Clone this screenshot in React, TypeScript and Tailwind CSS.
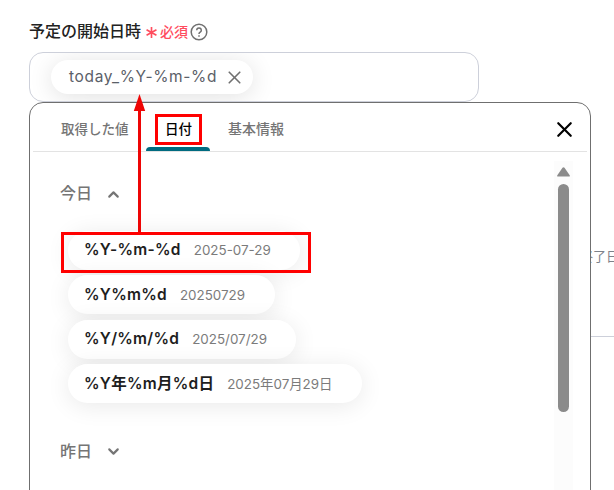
import { ChevronDown, ChevronUp, X } from "lucide-react";

type DateFormat = {
  format: string;
  example: string;
  width: string;
};

const formats: DateFormat[] = [
  { format: "%Y-%m-%d", example: "2025-07-29", width: "w-[232px]" },
  { format: "%Y%m%d", example: "20250729", width: "w-[207px]" },
  { format: "%Y/%m/%d", example: "2025/07/29", width: "w-[228px]" },
  { format: "%Y年%m月%d日", example: "2025年07月29日", width: "w-[294px]" },
];

function FieldLabel() {
  return (
    <div className="flex h-[22px] items-center whitespace-nowrap">
      <span className="w-[112px] text-[16px] font-medium text-[#222]">予定の開始日時</span>
      <svg className="ml-[5px] mt-[3px] h-[11px] w-[11px]" viewBox="0 0 10 10" stroke="#ff4d5e" strokeWidth="1.5">
        <path d="M5 0v10M.5 2.5l9 5M9.5 2.5l-9 5" />
      </svg>
      <span className="ml-[3px] text-[14px] font-medium text-[#ff4d5e]">必須</span>
      <svg className="ml-[2px] mt-px h-[18px] w-[18px]" viewBox="0 0 18 18" fill="none" stroke="#707070" strokeWidth="1.5">
        <circle cx="9" cy="9" r="7.8" />
        <path d="M6.7 7.2a2.3 2.3 0 1 1 3.5 2C9.3 9.8 9 10.1 9 11" />
        <path d="M9 12.2v1.6" />
      </svg>
    </div>
  );
}

function SelectedValue() {
  return (
    <div className="h-[50px] w-[450px] overflow-hidden rounded-[14px] border border-[#cdd0da] pl-[21px] pt-[7px]">
      <div className="flex h-[34px] w-[202px] items-center rounded-full bg-white pl-[18px] shadow-[0_3px_24px_rgba(0,0,0,0.12)]">
        <span className="w-[149px] whitespace-nowrap text-[15.5px] tracking-[0.65px] text-[#5b6068]">today_%Y-%m-%d</span>
        <X className="ml-[6px]" size={21} strokeWidth={1.9} color="#707070" />
      </div>
    </div>
  );
}

function Tabs() {
  return (
    <div className="ml-[3px] mr-[3px] flex h-[49px] border-b border-[#e3e3e3] text-[13.5px] font-medium text-[#757575]">
      <div className="w-[113px] whitespace-nowrap pl-[28px] pt-[16px] leading-5">取得した値</div>
      <div className="relative w-[64px] pl-px pt-[16px] text-center leading-5 text-black">
        日付
        <span className="absolute bottom-0 left-0 h-1 w-full rounded-t bg-[#006b80]" />
        <span className="absolute left-[9px] top-[11px] h-[31px] w-[47px] border-3 border-[#ff0000]" />
      </div>
      <div className="whitespace-nowrap pl-[18px] pt-[16px] text-[14px] leading-5">基本情報</div>
      <X className="ml-auto mr-[10px] mt-[14px]" size={25} strokeWidth={2.1} color="#000" />
    </div>
  );
}

function FormatChip({ format, example, width }: DateFormat) {
  return (
    <div
      className={`${width} flex h-[39px] items-center gap-[13px] whitespace-nowrap rounded-full bg-white pl-[16px] shadow-[0_3px_24px_rgba(0,0,0,0.09)]`}
    >
      <span className="text-[15.5px] font-semibold tracking-[0.25px] text-[#1e1e1e]">{format}</span>
      <span className="pt-px text-[13.4px] text-[#7b7b7b]">{example}</span>
    </div>
  );
}

function ScrollBar() {
  return (
    <div className="mt-[9px] flex h-[340px] w-[19px] flex-col items-center bg-[#fcfcfc] pt-[6px]">
      <svg className="h-[10px] w-[13px]" viewBox="0 0 13 10" fill="#8b8b8b">
        <path d="M5.5.8q1-1.2 2 0l5.2 7.4q.6 1.4-.8 1.4H1.1q-1.4 0-.8-1.4z" />
      </svg>
      <div className="mt-[7px] h-[228px] w-[11px] rounded-full bg-[#8b8b8b]" />
    </div>
  );
}

function ValuePicker() {
  return (
    <div className="absolute left-[29px] top-[102px] h-[402px] w-[562px] rounded-[14px] border border-[#6f6f6f] bg-white">
      <Tabs />
      <div className="flex justify-between pr-[17px]">
        <div className="pl-[30px] pt-[30px]">
          <div className="flex h-[22px] items-center text-[16px] font-medium text-[#757575]">
            <span className="w-[45px]">今日</span>
            <ChevronUp className="mt-[2px]" size={17} strokeWidth={3} />
          </div>
          <div className="ml-[8px] mt-[26.5px] flex flex-col gap-[5.5px]">
            {formats.map((item) => (
              <FormatChip key={item.format} {...item} />
            ))}
          </div>
          <div className="mt-[36.5px] flex h-[22px] items-center text-[16px] font-medium text-[#757575]">
            <span className="w-[45px]">昨日</span>
            <ChevronDown className="mt-[2px]" size={17} strokeWidth={3} />
          </div>
        </div>
        <ScrollBar />
      </div>
    </div>
  );
}

function Callouts() {
  return (
    <>
      <svg className="absolute left-[133px] top-[94px] h-[140px] w-[13px]" viewBox="0 0 13 140">
        <path d="M6.5 10v130" stroke="#ee0505" strokeWidth="3" />
        <path d="M6.5 0 12.2 17H.8z" fill="#ee0505" />
      </svg>
      <div className="absolute left-[61px] top-[232px] h-[41px] w-[250px] border-3 border-[#ff0000]" />
    </>
  );
}

export default function App() {
  return (
    <div className="relative h-[490px] w-[614px] overflow-hidden bg-white font-[Inter,'Noto_Sans_CJK_JP',sans-serif]">
      <div className="pl-[29px] pt-[20px]">
        <FieldLabel />
        <div className="mt-[10px]">
          <SelectedValue />
        </div>
      </div>
      {/* next field, mostly hidden behind the picker */}
      <div className="ml-[580px] mt-[144px] h-[91px] border-b border-[#cdd0da] whitespace-nowrap text-[13px] leading-5 text-[#7d828a]">
        終了日
      </div>
      <ValuePicker />
      <Callouts />
    </div>
  );
}
